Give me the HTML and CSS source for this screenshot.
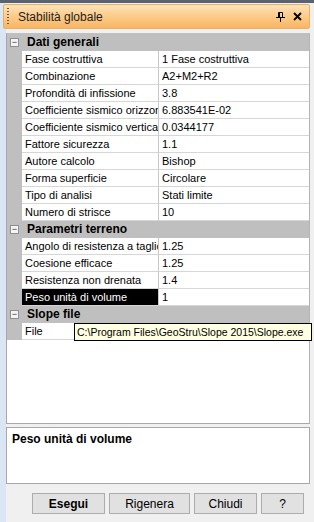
FILE: index.html
```html
<!DOCTYPE html>
<html lang="it">
<head>
  <meta charset="UTF-8">
  <title>Stabilità globale</title>
  <link rel="stylesheet" href="styles.css">
</head>
<body>
  <div class="topband"></div>
  <div class="window">
    <div class="titlebar">
      <span class="grip"></span>
      <span class="title">Stabilità globale</span>
      <span class="tools">
        <svg width="9" height="10" viewBox="0 0 9 10">
          <path d="M2.5 0.5h4v5h-4z M3.5 0.5v5" fill="none" stroke="#000" stroke-width="1"/>
          <path d="M0 5.5h9 M4.5 5.5v4.5" stroke="#000" stroke-width="1"/>
        </svg>
        <svg width="9" height="9" viewBox="0 0 9 9">
          <path d="M1 1l7 7 M8 1l-7 7" stroke="#000" stroke-width="1.8"/>
        </svg>
      </span>
    </div>

    <div class="body">
      <div class="grid">
        <!-- Dati generali -->
        <div class="cat"><span class="box">−</span>Dati generali</div>
        <div class="row"><div class="name">Fase costruttiva</div><div class="val">1 Fase costruttiva</div></div>
        <div class="row"><div class="name">Combinazione</div><div class="val">A2+M2+R2</div></div>
        <div class="row"><div class="name">Profondità di infissione</div><div class="val">3.8</div></div>
        <div class="row"><div class="name">Coefficiente sismico orizzontale</div><div class="val">6.883541E-02</div></div>
        <div class="row"><div class="name">Coefficiente sismico verticale</div><div class="val">0.0344177</div></div>
        <div class="row"><div class="name">Fattore sicurezza</div><div class="val">1.1</div></div>
        <div class="row"><div class="name">Autore calcolo</div><div class="val">Bishop</div></div>
        <div class="row"><div class="name">Forma superficie</div><div class="val">Circolare</div></div>
        <div class="row"><div class="name">Tipo di analisi</div><div class="val">Stati limite</div></div>
        <div class="row"><div class="name">Numero di strisce</div><div class="val">10</div></div>

        <!-- Parametri terreno -->
        <div class="cat"><span class="box">−</span>Parametri terreno</div>
        <div class="row"><div class="name">Angolo di resistenza a taglio</div><div class="val">1.25</div></div>
        <div class="row"><div class="name">Coesione efficace</div><div class="val">1.25</div></div>
        <div class="row"><div class="name">Resistenza non drenata</div><div class="val">1.4</div></div>
        <div class="row selected"><div class="name">Peso unità di volume</div><div class="val">1</div></div>

        <!-- Slope file -->
        <div class="cat"><span class="box">−</span>Slope file</div>
        <div class="row"><div class="name">File</div><div class="val"></div></div>

        <div class="tooltip">C:\Program Files\GeoStru\Slope 2015\Slope.exe</div>
      </div>

      <div class="desc">Peso unità di volume</div>

      <div class="buttons">
        <button class="btn default w1">Esegui</button>
        <button class="btn w2">Rigenera</button>
        <button class="btn w3">Chiudi</button>
        <button class="btn w4">?</button>
      </div>
    </div>
  </div>
</body>
</html>
```

FILE: styles.css
```css
html, body {
  margin: 0;
  padding: 0;
}
body {
  width: 314px;
  height: 522px;
  overflow: hidden;
  background: #f0f0f0;
  font-family: "Liberation Sans", Arial, sans-serif;
  font-size: 11px;
  color: #000;
}
.topband {
  height: 3px;
  background: #5b616d;
}
.window {
  height: 519px;
  display: flex;
  flex-direction: column;
  background: linear-gradient(to right, #dbe6f5 0, #dbe6f5 6px, #f0f0f0 6px);
}
.titlebar {
  margin: 1px 4px 0 3px;
  height: 23px;
  display: flex;
  align-items: center;
  border: 1px solid #e9b067;
  border-radius: 2px;
  background: linear-gradient(to bottom, #fde2b8 0%, #fcc985 55%, #f9b564 100%);
}
.grip {
  width: 2px;
  height: 17px;
  margin-left: 3px;
  background: repeating-linear-gradient(to bottom, #6a5a40 0, #6a5a40 1px, transparent 1px, transparent 3px);
}
.title {
  margin-left: 9px;
  font-size: 12px;
  color: #1e1e1e;
  flex: 1;
}
.tools {
  display: flex;
  align-items: center;
  gap: 8px;
  margin-right: 7px;
}
.body {
  flex: 1;
  display: flex;
  flex-direction: column;
  padding: 4px 4px 0 7px;
}
.grid {
  position: relative;
  height: 389px;
  background: #fff;
  border-right: 1px solid #b4b4b4;
  border-bottom: 1px solid #a8a8a8;
  border-left: 1px solid #a8a8a8;
  margin-left: -1px;
  padding-top: 1px;
}
.grid::before {
  content: "";
  position: absolute;
  left: 0;
  top: 0;
  right: 0;
  height: 1px;
  background: #c0c0c0;
}
.cat {
  height: 17px;
  line-height: 17px;
  background: #bfbfbf;
  font-weight: bold;
  font-size: 12px;
  display: flex;
  align-items: center;
}
.box {
  width: 7px;
  height: 7px;
  margin: 0 8px 0 3px;
  border: 1px solid #8f8f8f;
  background: #f4f4f4;
  font-size: 9px;
  line-height: 7px;
  text-align: center;
  font-weight: normal;
  color: #333;
}
.row {
  display: flex;
  height: 17px;
  background: #bfbfbf;
  padding-left: 15px;
}
.row .name,
.row .val {
  height: 16px;
  line-height: 16px;
  background: #fff;
  border-bottom: 1px solid #d6d6d6;
  white-space: nowrap;
  overflow: hidden;
  font-size: 11px;
}
.row .name {
  width: 133px;
  padding-left: 3px;
  border-right: 1px solid #c8c8c8;
}
.row .val {
  flex: 1;
  padding-left: 3px;
}
.row.selected .name {
  background: #000;
  color: #fff;
}
.tooltip {
  position: absolute;
  left: 67px;
  top: 290px;
  width: 234px;
  height: 16px;
  line-height: 16px;
  padding-left: 2px;
  background: #ffffe1;
  border: 1px solid #000;
  font-size: 10.5px;
  white-space: nowrap;
  overflow: hidden;
}
.desc {
  height: 57px;
  margin-top: 3px;
  margin-left: -1px;
  border: 1px solid #a8a8a8;
  background: #fff;
  font-weight: bold;
  font-size: 12px;
  padding: 4px 5px;
  box-sizing: border-box;
}
.buttons {
  display: flex;
  gap: 4px;
  margin-top: 9px;
  padding-left: 25px;
}
.btn {
  height: 21px;
  padding: 0;
  background: #e1e1e1;
  border: 1px solid #adadad;
  font-family: "Liberation Sans", Arial, sans-serif;
  font-size: 12px;
  color: #000;
}
.btn.default {
  font-weight: bold;
}
.w1 { width: 73px; }
.w2 { width: 81px; }
.w3 { width: 63px; }
.w4 { width: 43px; }
```
